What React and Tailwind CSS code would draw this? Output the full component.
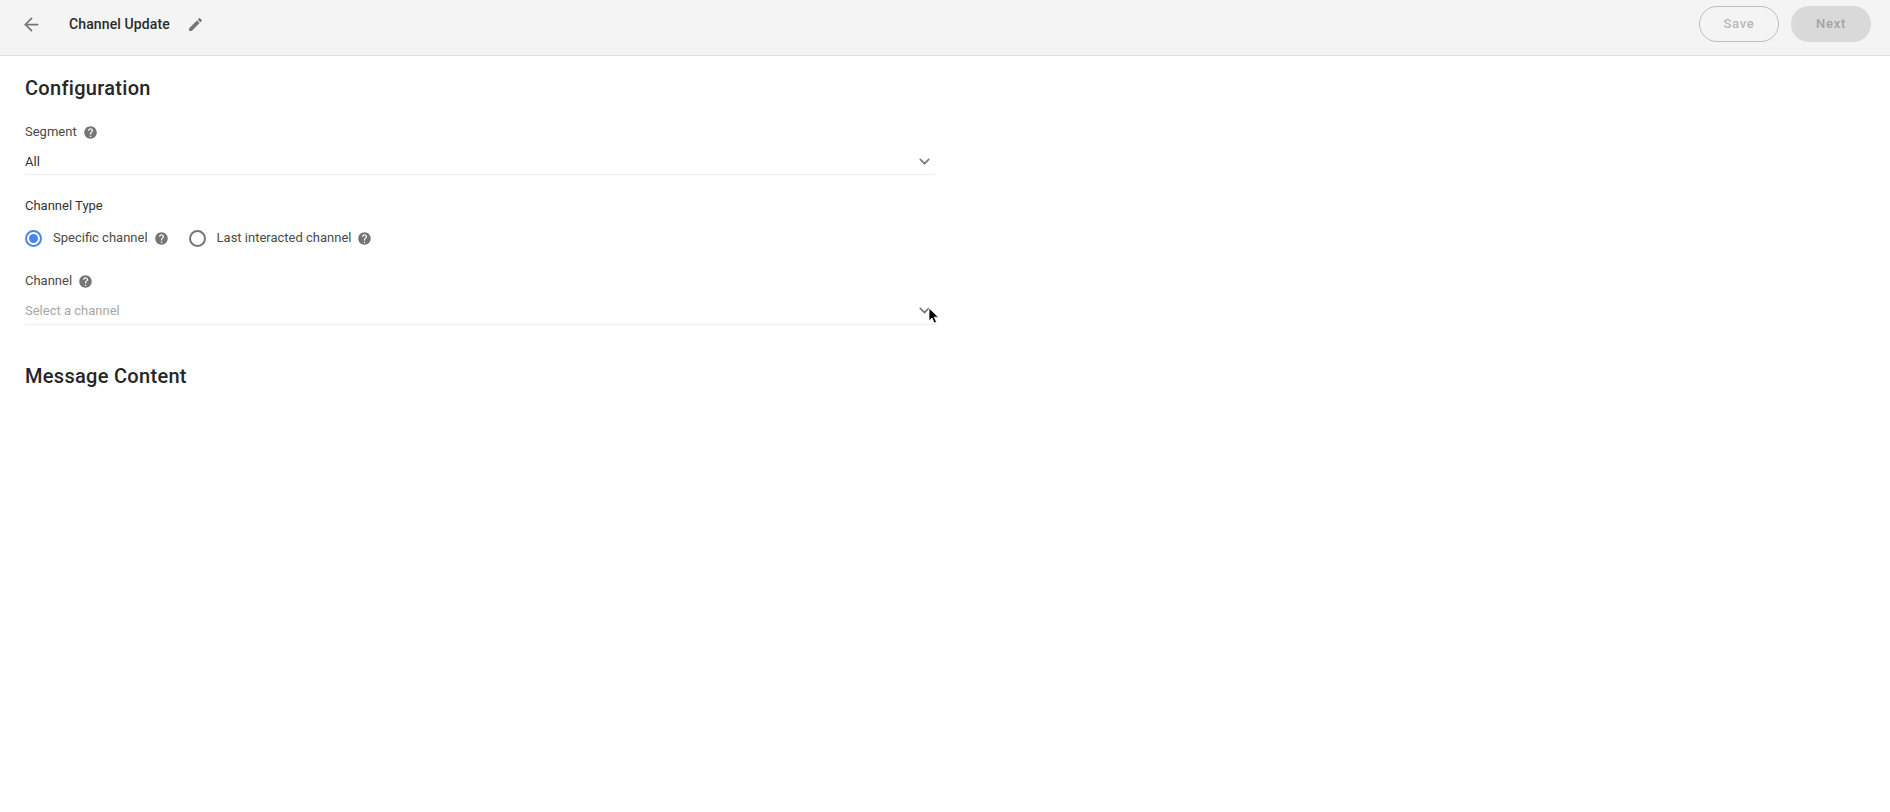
import React from "react";
import { ArrowLeft, ChevronDown } from "lucide-react";

function Help() {
  return (
    <svg viewBox="0 0 24 24" className="w-[15px] h-[15px] shrink-0" fill="#757575">
      <path d="M12 2C6.48 2 2 6.48 2 12s4.48 10 10 10 10-4.48 10-10S17.52 2 12 2zm1 17h-2v-2h2v2zm2.07-7.75l-.9.92C13.45 12.9 13 13.5 13 15h-2v-.5c0-1.1.45-2.1 1.17-2.83l1.24-1.26c.37-.36.59-.86.59-1.41 0-1.1-.9-2-2-2s-2 .9-2 2H8c0-2.21 1.79-4 4-4s4 1.79 4 4c0 .88-.36 1.68-.93 2.25z" />
    </svg>
  );
}

function Pencil() {
  return (
    <svg viewBox="0 0 24 24" className="w-[17px] h-[17px]" fill="#757575">
      <path d="M3 17.25V21h3.75L17.81 9.94l-3.75-3.75L3 17.25zM20.71 7.04a1 1 0 0 0 0-1.41l-2.34-2.34a1 1 0 0 0-1.41 0l-1.83 1.83 3.75 3.75 1.83-1.83z" />
    </svg>
  );
}

function Select({ value, muted, pad, children }) {
  return (
    <div className={"relative flex items-center justify-between h-[29px] w-[910px] border-b border-[#ebebeb] " + pad}>
      <span className={"text-[13px] " + (muted ? "text-[#a8a8a8]" : "text-[#333333]")}>{value}</span>
      <ChevronDown className="w-[17px] h-[17px] mr-[2px] text-[#757575]" strokeWidth={2.2} />
      {children}
    </div>
  );
}

function Cursor() {
  return (
    <svg viewBox="0 0 12 18" className="absolute left-[903px] top-[11px] w-[12px] h-[18px]">
      <path d="M1 1v13l3-3 2.2 5 2.3-1-2.2-4.8H10.500z" fill="#000" stroke="#fff" strokeWidth="0.8" />
    </svg>
  );
}

export default function App() {
  return (
    <div className="min-h-[812px] bg-white font-['Roboto',sans-serif] text-[#333333]">
      <header className="flex items-center justify-between h-[56px] bg-[#f4f4f4] border-b border-[#dedede] pb-[7px]">
        <div className="flex items-center">
          <ArrowLeft className="ml-[21px] w-[21px] h-[21px] text-[#757575]" strokeWidth={2} />
          <span className="ml-[27px] text-[14px] font-medium tracking-[0.12px] text-[#2b2b2b]">Channel Update</span>
          <span className="ml-[17px]"><Pencil /></span>
        </div>
        <div className="flex items-center gap-[12px] pr-[19px]">
          <button className="w-[80px] h-[36px] rounded-full border border-[#bdbdbd] text-[13px] font-medium tracking-[0.7px] text-[#b8b8b8]">Save</button>
          <button className="w-[80px] h-[36px] rounded-full bg-[#d9d9d9] text-[13px] font-medium tracking-[0.7px] text-[#a3a3a3]">Next</button>
        </div>
      </header>
      <main className="pl-[25px]">
        <h2 className="mt-[19px] text-[20px] leading-[26px] font-medium tracking-[0.3px] text-[#262626]">Configuration</h2>
        <div className="mt-[21px] flex items-center gap-[6px] h-[20px] text-[13px] text-[#4a4a4a]">Segment <Help /></div>
        <div className="mt-[4px]"><Select value="All" pad="pt-[3px]" /></div>
        <div className="mt-[21px] h-[20px] flex items-center text-[13px] text-[#333333]">Channel Type</div>
        <div className="mt-[12px] flex items-center h-[20px] text-[13px] text-[#4a4a4a]">
          <span className="w-[17px] h-[17px] rounded-full border-2 border-[#4a86e8] flex items-center justify-center">
            <span className="w-[9px] h-[9px] rounded-full bg-[#4a86e8]" />
          </span>
          <span className="ml-[11px]">Specific channel</span>
          <span className="ml-[6px]"><Help /></span>
          <span className="ml-[20px] w-[17px] h-[17px] rounded-full border-2 border-[#757575]" />
          <span className="ml-[11px]">Last interacted channel</span>
          <span className="ml-[5px]"><Help /></span>
        </div>
        <div className="mt-[23px] flex items-center gap-[6px] h-[20px] text-[13px] text-[#4a4a4a]">Channel <Help /></div>
        <div className="mt-[5px]"><Select value="Select a channel" muted pad="pt-[1px]"><Cursor /></Select></div>
        <h2 className="mt-[38px] text-[20px] leading-[26px] font-medium tracking-[0.3px] text-[#262626]">Message Content</h2>
      </main>
    </div>
  );
}
